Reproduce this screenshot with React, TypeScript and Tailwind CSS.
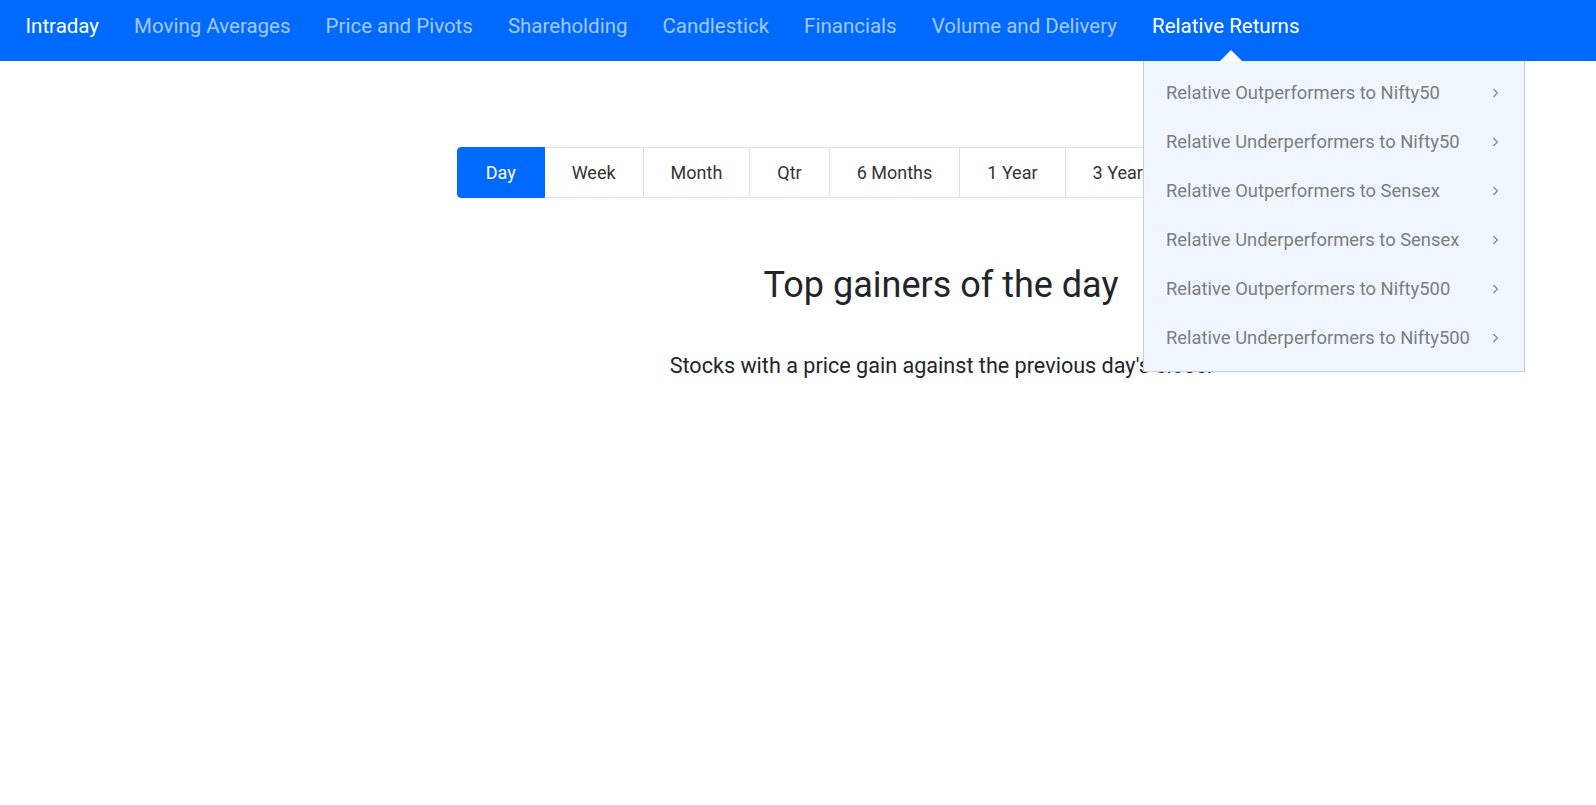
import React from "react";

const navItems = [
  "Intraday",
  "Moving Averages",
  "Price and Pivots",
  "Shareholding",
  "Candlestick",
  "Financials",
  "Volume and Delivery",
  "Relative Returns",
];

const periods = ["Day", "Week", "Month", "Qtr", "6 Months", "1 Year", "3 Years", "5 Years", "10 Years"];

const menuItems = [
  "Relative Outperformers to Nifty50",
  "Relative Underperformers to Nifty50",
  "Relative Outperformers to Sensex",
  "Relative Underperformers to Sensex",
  "Relative Outperformers to Nifty500",
  "Relative Underperformers to Nifty500",
];

const Chevron = () => (
  <svg width="7" height="10" viewBox="0 0 7 10" fill="none">
    <path d="M1.5 1 L5.4 5 L1.5 9" stroke="#8a8a8a" strokeWidth="1.3" />
  </svg>
);

export default function App() {
  return (
    <div className="min-h-screen bg-white font-['Roboto',sans-serif]">
      <nav className="relative flex h-[61px] items-start bg-[#006aff] pl-[8px]">
        {navItems.map((item, i) => (
          <a
            key={item}
            className={`px-[17.5px] pt-[11px] text-[20.5px] leading-[31px] whitespace-nowrap ${
              i === 0 || i === navItems.length - 1 ? "text-white" : "text-[#a3c8ff]"
            }`}
          >
            {item}
          </a>
        ))}

        <span className="absolute bottom-0 left-[1220px] h-0 w-0 border-r-[11.5px] border-b-[11px] border-l-[11.5px] border-r-transparent border-b-white border-l-transparent" />

        <div className="absolute top-[61px] left-[1143px] z-10 w-[382px] border-r border-b border-l border-[#c9ced6] bg-[#eff6ff] pt-[7px] pb-[9px]">
          {menuItems.map((m) => (
            <div key={m} className="flex h-[49px] items-center justify-between pr-[25px] pl-[22px]">
              <span className="text-[18.4px] text-[#7d7d7d]">{m}</span>
              <Chevron />
            </div>
          ))}
        </div>
      </nav>

      <div className="flex">
        <div className="w-[286px] shrink-0" />
        <main className="flex flex-1 flex-col items-center pt-[86px]">
          <div className="mr-[6px] flex">
            {periods.map((p, i) => (
              <button
                key={p}
                className={`border-y border-r py-[11px] text-[18px] leading-[27px] ${
                  i === 0
                    ? "rounded-l-[4px] border-l border-[#006aff] bg-[#006aff] px-[28px] text-white"
                    : "border-[#dee2e6] bg-white px-[27px] text-[#333]"
                } ${i === periods.length - 1 ? "rounded-r-[4px]" : ""}`}
              >
                {p}
              </button>
            ))}
          </div>

          <h1 className="mt-[66px] text-[36px] leading-[43px] font-normal text-[#212529]">
            Top gainers of the day
          </h1>
          <p className="mt-[43px] text-[21.6px] leading-[32px] text-[#212529]">
            Stocks with a price gain against the previous day's close.
          </p>
        </main>
      </div>
    </div>
  );
}
